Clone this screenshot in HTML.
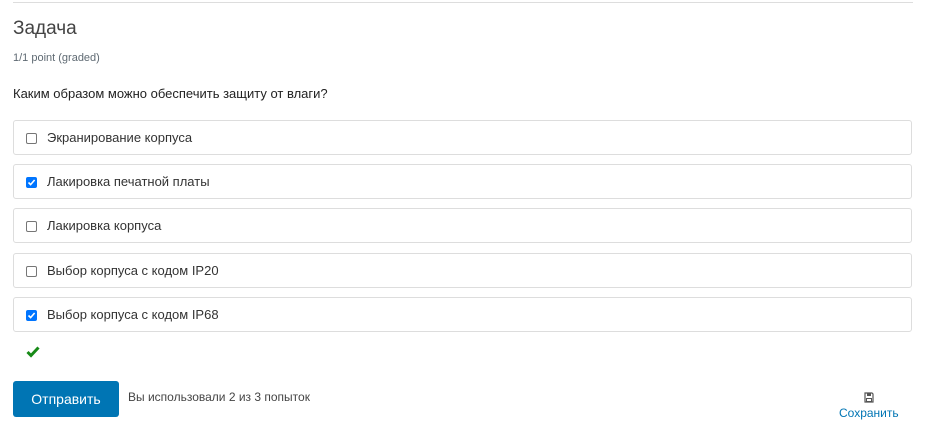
<!DOCTYPE html>
<html><head><meta charset="utf-8"><style>
body{margin:0;background:#fff;font-family:"Liberation Sans","DejaVu Sans",sans-serif;color:#313131;width:933px;height:437px;position:relative;overflow:hidden}
.line{position:absolute;left:13px;top:2px;width:900px;height:1px;background:#ddd}
.t{position:absolute;left:13px;top:18px;font-size:19px;color:#444}
.pts{position:absolute;left:13px;top:52px;font-size:11px;color:#5f6a73}
.q{position:absolute;left:13px;top:86px;font-size:13px;color:#222}
.opt{position:absolute;left:13px;width:897px;height:33px;border:1px solid #ddd;border-radius:3px;font-size:13px;color:#333}
.opt span{position:absolute;left:33px;top:9px}
.cb{position:absolute;left:12px;top:12px;width:9px;height:9px;border:1px solid #767676;border-radius:2px;background:#fff}
.cb.on{background:#0075ff;border-color:#0075ff}
.cb.on svg{position:absolute;left:0;top:0}
.btn{position:absolute;left:13px;top:381px;width:106px;height:36px;background:#0075b4;border-radius:3px;color:#fff;font-size:14px;text-align:center;line-height:36px}
.att{position:absolute;left:128px;top:390px;font-size:12px;color:#444}
.save{position:absolute;left:839px;top:406px;font-size:12px;color:#0075b4}
</style></head><body>
<div class="line"></div>
<div class="t">Задача</div>
<div class="pts">1/1 point (graded)</div>
<div class="q">Каким образом можно обеспечить защиту от влаги?</div>
<div class="opt" style="top:120px"><div class="cb"></div><span>Экранирование корпуса</span></div>
<div class="opt" style="top:164px"><div class="cb on"><svg width="9" height="9" viewBox="0 0 9 9"><path d="M1.5 4.5L3.6 6.6L7.6 2" stroke="#fff" stroke-width="1.6" fill="none"/></svg></div><span>Лакировка печатной платы</span></div>
<div class="opt" style="top:208px"><div class="cb"></div><span>Лакировка корпуса</span></div>
<div class="opt" style="top:253px"><div class="cb"></div><span>Выбор корпуса с кодом IP20</span></div>
<div class="opt" style="top:297px"><div class="cb on"><svg width="9" height="9" viewBox="0 0 9 9"><path d="M1.5 4.5L3.6 6.6L7.6 2" stroke="#fff" stroke-width="1.6" fill="none"/></svg></div><span>Выбор корпуса с кодом IP68</span></div>
<svg style="position:absolute;left:26px;top:346px" width="14" height="12" viewBox="0 0 14 12"><path d="M1.5 6L5 9.5L12.5 1.5" stroke="#178a17" stroke-width="3" fill="none"/></svg>
<div class="btn">Отправить</div>
<div class="att">Вы использовали 2 из 3 попыток</div>
<svg style="position:absolute;left:864px;top:392px" width="10" height="11" viewBox="0 0 10 11"><path d="M1 1H8L9 2V10H1Z" fill="none" stroke="#555" stroke-width="1.2"/><rect x="3" y="1" width="4" height="3" fill="#555"/><rect x="2.5" y="6.5" width="5" height="3" fill="none" stroke="#555"/></svg>
<div class="save">Сохранить</div>
</body></html>
